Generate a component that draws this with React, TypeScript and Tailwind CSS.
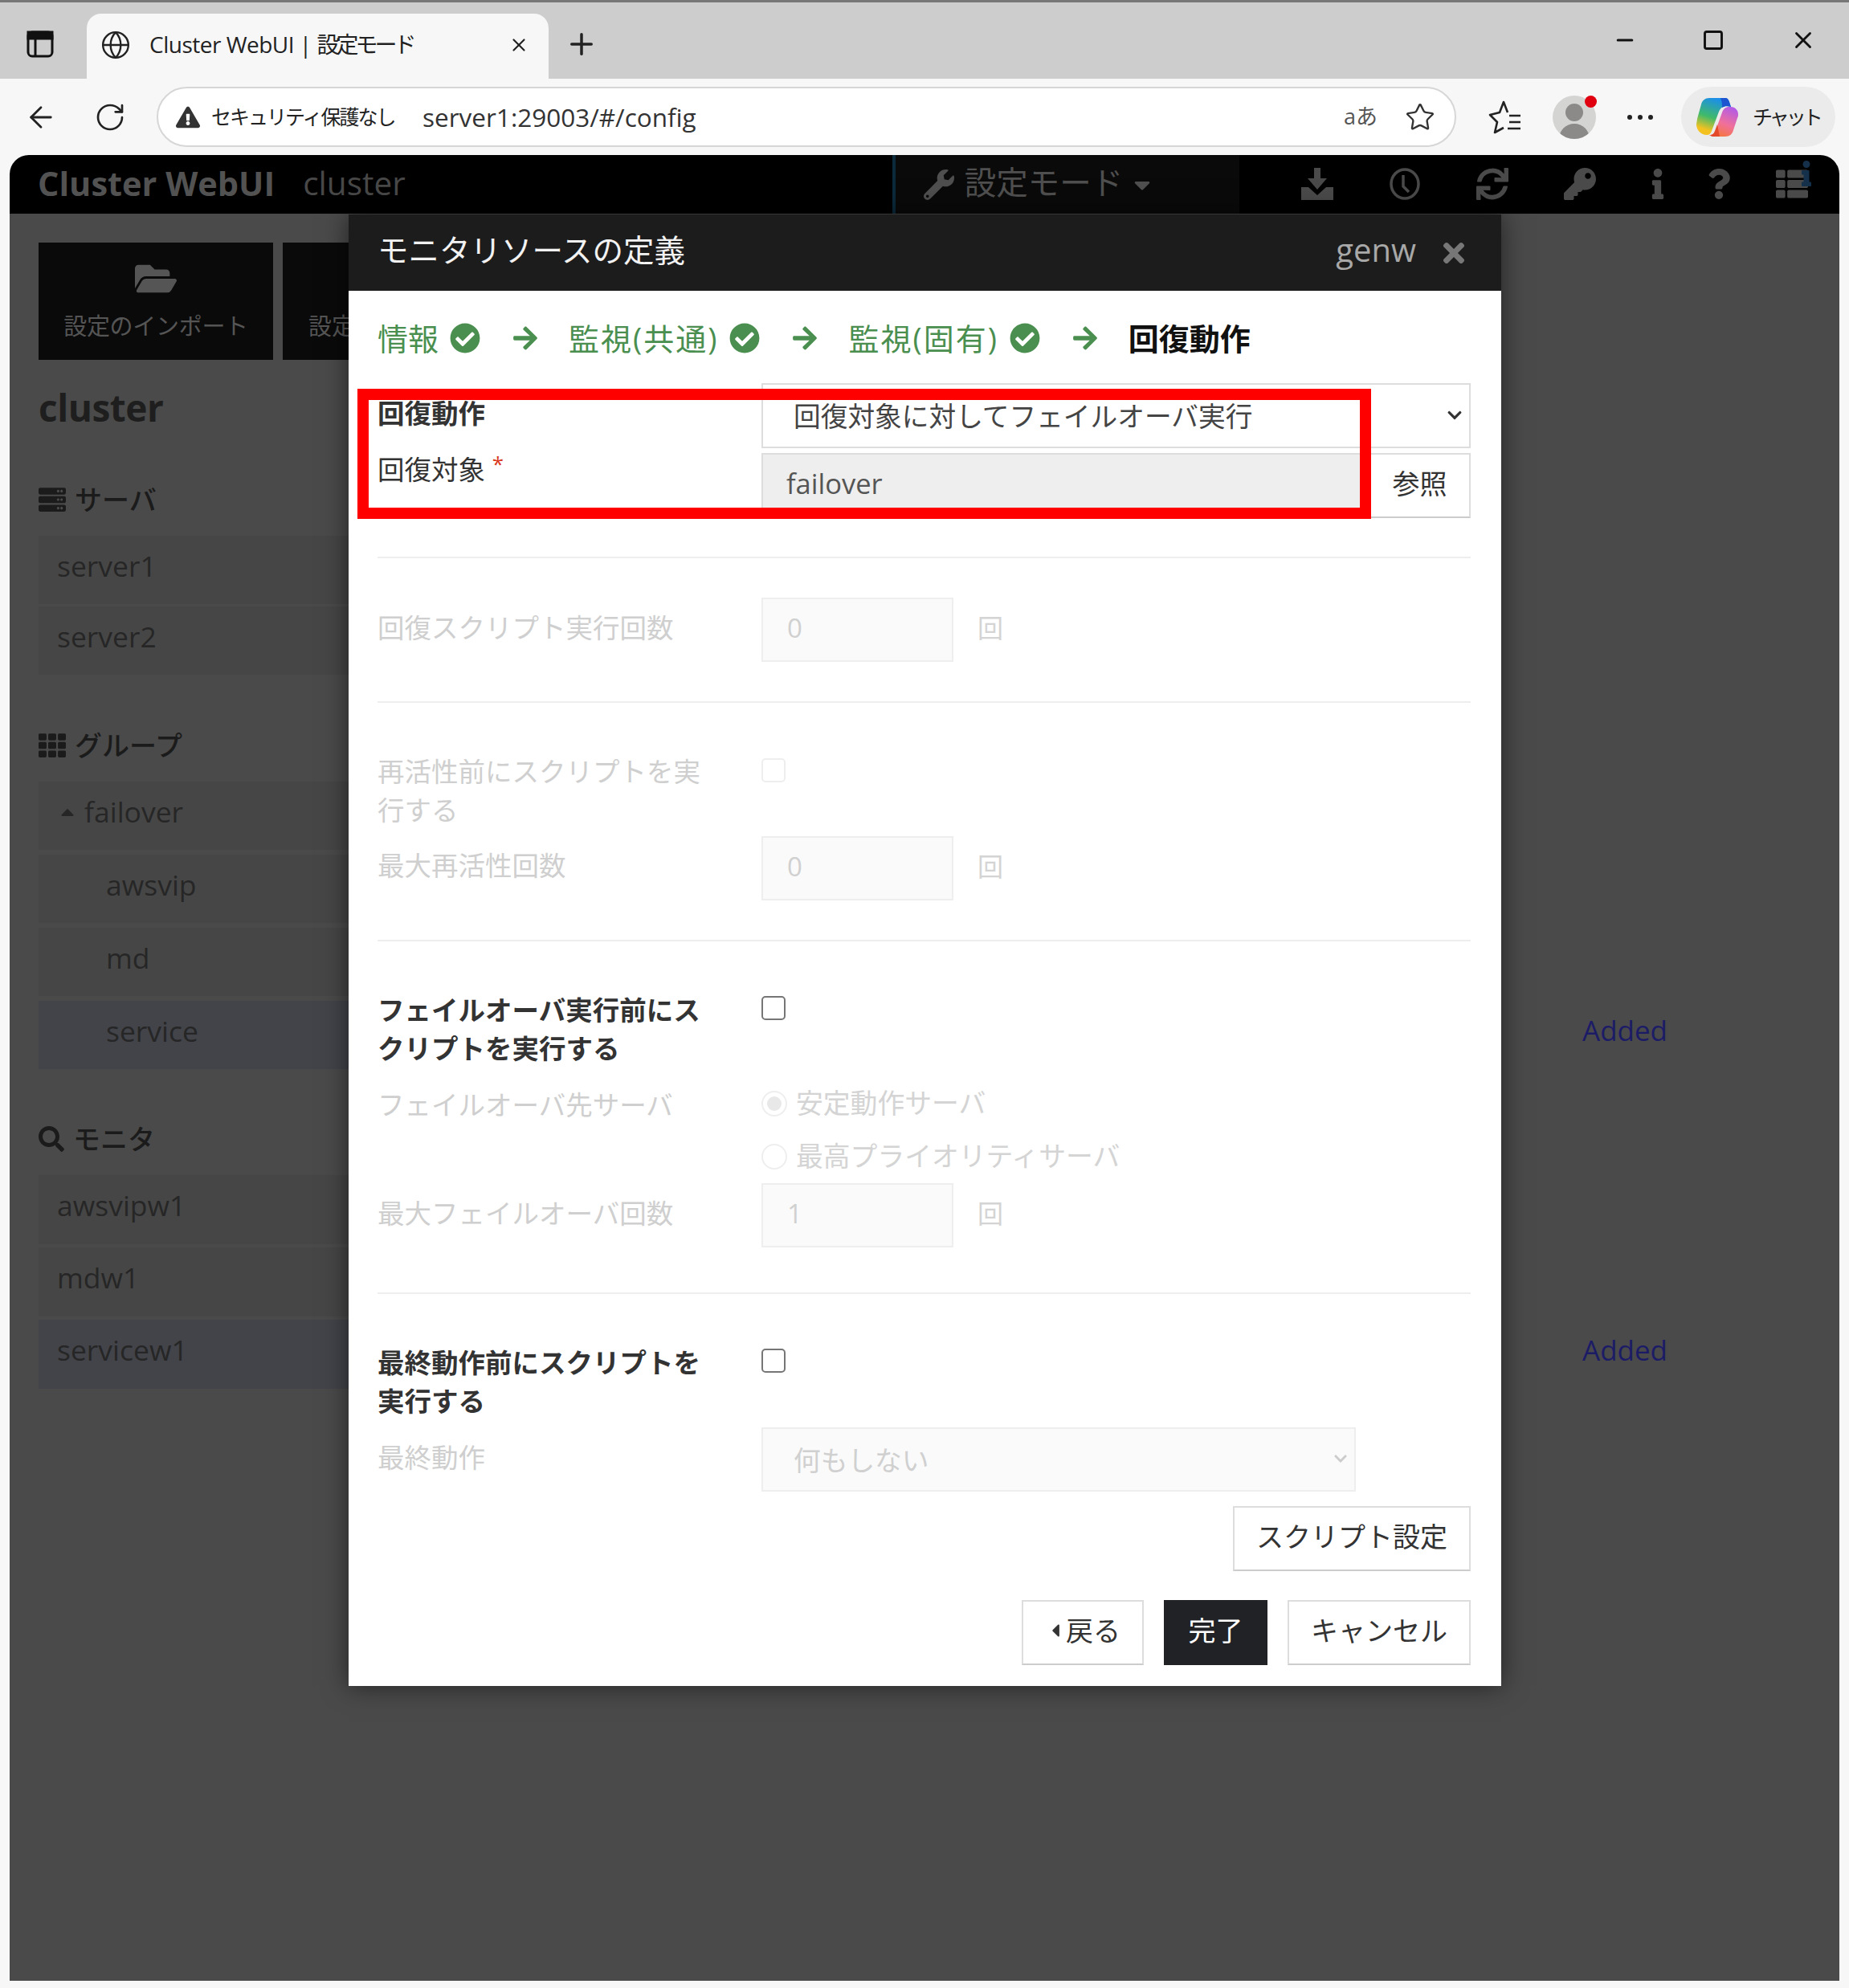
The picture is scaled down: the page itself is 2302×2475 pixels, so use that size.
import { ArrowLeft, Globe, Minus, Plus, RotateCw, Square, Star, X } from 'lucide-react';
import { ReactNode } from 'react';
import {
  FaArrowRight,
  FaCaretDown,
  FaCaretLeft,
  FaCaretUp,
  FaCheckCircle,
  FaChevronDown,
  FaExclamationTriangle,
  FaFolderOpen,
  FaInfo,
  FaKey,
  FaQuestion,
  FaSearch,
  FaServer,
  FaSync,
  FaTh,
  FaThList,
  FaTimes,
  FaWrench,
} from 'react-icons/fa';

const fontStack = "font-['Open_Sans','Noto_Sans_CJK_JP',sans-serif]";

const TabBar = () => (
  <div className="flex h-[98px] items-end border-t-[3px] border-[#777] bg-[#cdcdcd]">
    <svg className="mb-[26px] ml-[33px] h-[34px] w-[34px]" viewBox="0 0 34 34" fill="none" stroke="#111" strokeWidth="3">
      <rect x="2" y="2" width="30" height="30" rx="5" />
      <rect x="2" y="2" width="30" height="8" fill="#111" />
      <path d="M11 10v22" />
    </svg>
    <div className="ml-[41px] flex h-[81px] w-[575px] items-center rounded-t-[18px] bg-[#f7f7f7] pb-[3px] pl-[17px]">
      <Globe size={38} strokeWidth={1.5} className="text-[#222]" />
      <span className="ml-[23px] w-[447px] pb-[2px] text-[28px] tracking-[-0.5px] text-[#222]">
        Cluster WebUI | <span className="tracking-[-4px]">設定モード</span>
      </span>
      <X size={26} strokeWidth={2} className="text-[#222]" />
    </div>
    <Plus size={42} strokeWidth={2} className="mb-[22px] ml-[20px] text-[#222]" />
    <div className="mb-[31px] ml-auto flex items-center gap-[81px] pr-[40px] text-[#111]">
      <Minus size={30} strokeWidth={2.5} />
      <Square size={28} strokeWidth={2.5} />
      <X size={34} strokeWidth={2} />
    </div>
  </div>
);

const CopilotLogo = () => (
  <svg className="h-[48px] w-[52px]" viewBox="0 0 52 48">
    <defs>
      <linearGradient id="copilotLeft" x1="0.5" y1="0" x2="0.2" y2="1">
        <stop offset="0" stopColor="#1b8fe8" />
        <stop offset="0.5" stopColor="#3fba6a" />
        <stop offset="0.85" stopColor="#f4c220" />
      </linearGradient>
      <linearGradient id="copilotRight" x1="0.7" y1="0" x2="0.3" y2="1">
        <stop offset="0" stopColor="#b45ce6" />
        <stop offset="0.55" stopColor="#f0709a" />
        <stop offset="1" stopColor="#f6763a" />
      </linearGradient>
    </defs>
    <path d="M16 0h20c3 0 4 2 5 5l2 6c-6-2-12-1-15 6l-9 24c-1 3-3 5-6 5-7 0-13-6-13-13 0-2 1-5 1-7L6 8c1-5 5-8 10-8z" fill="url(#copilotLeft)" />
    <path d="M30 0h6c3 0 4 2 5 5l2 6c-4-1-8-1-11 1 0-4 0-8-2-12z" fill="#1c55cf" />
    <path d="M36 48H16c4 0 6-2 7-5l9-25c2-6 6-7 9-7h2c5 0 9 4 9 9 0 2 0 3-1 5L46 40c-1 5-5 8-10 8z" fill="url(#copilotRight)" />
    <path d="M16 46c4 0 6-2 7-5l3-8 3 15H20z" fill="#e4492a" />
  </svg>
);

const AddressBar = () => (
  <div className="flex h-[95px] items-center bg-[#f7f7f7] pl-[30px]">
    <ArrowLeft size={42} strokeWidth={1.6} className="text-[#222]" />
    <RotateCw size={40} strokeWidth={1.6} className="ml-[45px] text-[#222]" />
    <div className="ml-[38px] flex h-[75px] w-[1618px] items-center rounded-full border-2 border-[#d6d6d6] bg-white pl-[22px]">
      <FaExclamationTriangle size={30} className="text-[#333]" />
      <span className="ml-[14px] w-[263px] text-[25px] tracking-[-2px] text-[#222]">セキュリティ保護なし</span>
      <span className="text-[31.5px] leading-none text-[#333]">server1:29003/#/config</span>
      <span className="ml-auto text-[27px] text-[#555]">aあ</span>
      <Star size={38} strokeWidth={1.5} className="ml-[34px] mr-[24px] text-[#333]" />
    </div>
    <svg className="ml-[40px] h-[44px] w-[42px]" viewBox="0 0 42 44" fill="none" stroke="#222" strokeWidth="2.6" strokeLinejoin="round">
      <path d="M24 16L19 3l-5 13-12 3 9 9-3 13 11-6" />
      <path d="M26 20h14M26 28h14M24 36h16" />
    </svg>
    <div className="relative ml-[38px] flex h-[54px] w-[54px] flex-col items-center justify-end overflow-hidden rounded-full bg-[#d4d4d2]">
      <div className="mb-[3px] h-[22px] w-[22px] rounded-full bg-[#8b8a88]" />
      <div className="h-[19px] w-[38px] rounded-t-full bg-[#8b8a88]" />
    </div>
    <div className="relative -top-[19px] -ml-[14px] h-[15px] w-[15px] rounded-full bg-[#e0000f]" />
    <div className="ml-[38px] flex gap-[7px]">
      <span className="h-[6px] w-[6px] rounded-full bg-[#222]" />
      <span className="h-[6px] w-[6px] rounded-full bg-[#222]" />
      <span className="h-[6px] w-[6px] rounded-full bg-[#222]" />
    </div>
    <div className="ml-[35px] flex h-[75px] w-[192px] items-center rounded-full bg-[#ebebeb] pl-[19px]">
      <CopilotLogo />
      <span className="ml-[18px] text-[25px] tracking-[-4px] text-[#222]">チャット</span>
    </div>
  </div>
);

const AppHeader = () => (
  <div className="flex h-[73px] items-center overflow-hidden bg-black">
    <span className="ml-[35px] pb-[3px] text-[41.5px] font-bold text-[#525252]">Cluster WebUI</span>
    <span className="ml-[35px] pb-[3px] text-[40.5px] text-[#484848]">cluster</span>
    <div className="ml-[606px] flex h-full w-[432px] shrink-0 items-center border-l-4 border-[#0b2a3c] bg-[#0a0a0a] pl-[35px] text-[#4f4f4f]">
      <FaWrench size={38} />
      <span className="ml-[13px] pb-[3px] text-[39.5px]">設定モード</span>
      <FaCaretDown size={32} className="ml-[8px]" />
    </div>
    <div className="flex items-center pb-[2px] text-[#4a4a4a]">
      <svg className="ml-[77px] h-[40px] w-[40px]" viewBox="0 0 40 40" fill="currentColor">
        <path d="M16 0h8v13h8L20 27 8 13h8z" />
        <path d="M0 24h9l11 10 11-10h9v16H0z" />
      </svg>
      <svg className="ml-[70px] h-[40px] w-[38px]" viewBox="0 0 38 40" fill="none" stroke="currentColor" strokeWidth="3.5">
        <ellipse cx="19" cy="20" rx="17" ry="18" />
        <path d="M17 9v14l7 7" />
      </svg>
      <FaSync size={40} className="ml-[70px]" />
      <FaKey size={40} className="ml-[69px]" />
      <FaInfo size={38} className="ml-[58px]" />
      <FaQuestion size={38} className="ml-[38px]" />
      <div className="relative ml-[52px]">
        <FaThList size={40} />
        <FaInfo size={32} className="absolute -right-[14px] -top-[9px] text-[#14304a]" />
      </div>
    </div>
  </div>
);

const SideHeading = ({ icon, label, className }: { icon: ReactNode; label: string; className: string }) => (
  <div className={`flex h-[50px] items-center gap-[11px] text-[34px] font-medium text-[#1b1b1b] ${className}`}>
    {icon}
    <span>{label}</span>
  </div>
);

const SideRow = ({ label, indent = 'pl-[23px]', height = 'h-[85px]', active, added }: {
  label: ReactNode;
  indent?: string;
  height?: string;
  active?: boolean;
  added?: boolean;
}) => (
  <div className="flex items-center">
    <div className={`flex w-[500px] items-center pb-[10px] text-[35.5px] text-[#262626] ${height} ${indent} ${active ? 'bg-[#42444a]' : 'bg-[#464646]'}`}>
      {label}
    </div>
    {added && <span className="ml-[1422px] pb-[10px] text-[35px] text-[#1c1c66]">Added</span>}
  </div>
);

const Sidebar = () => (
  <div className="flex-1 bg-[#4a4a4a] pl-[36px] pt-[36px]">
    <div className="flex gap-[12px]">
      <div className="flex h-[146px] w-[292px] flex-col items-center bg-[#0a0a0a] pt-[19px] text-[#555]">
        <FaFolderOpen size={52} />
        <span className="mt-[11px] text-[29px] tracking-[-0.3px]">設定のインポート</span>
      </div>
      <div className="flex h-[146px] w-[292px] flex-col items-start bg-[#0a0a0a] pl-[32px] pt-[82px] text-[#555]">
        <span className="whitespace-nowrap text-[29px]">設定</span>
      </div>
    </div>
    <div className="mt-[29px] flex h-[60px] items-center text-[46px] font-bold tracking-[-0.5px] text-[#1e1e1e]">cluster</div>

    <SideHeading className="mt-[60px]" label="サーバ" icon={<FaServer size={34} />} />
    <div className="mt-[20px] flex flex-col gap-[3px]">
      <SideRow label="server1" />
      <SideRow label="server2" />
    </div>

    <SideHeading className="mt-[63px]" label="グループ" icon={<FaTh size={34} />} />
    <div className="mt-[20px] flex flex-col gap-[6px]">
      <SideRow label={<><FaCaretUp size={26} className="mr-[8px]" />failover</>} />
      <SideRow label="awsvip" indent="pl-[84px]" />
      <SideRow label="md" indent="pl-[84px]" />
      <SideRow label="service" indent="pl-[84px]" active added />
    </div>

    <SideHeading className="mt-[62px]" label="モニタ" icon={<FaSearch size={32} />} />
    <div className="mt-[20px] flex flex-col gap-[4px]">
      <SideRow label="awsvipw1" height="h-[86px]" />
      <SideRow label="mdw1" height="h-[86px]" />
      <SideRow label="servicew1" height="h-[86px]" active added />
    </div>
  </div>
);

const StepDone = ({ label, wide }: { label: string; wide?: boolean }) => (
  <>
    <span className={wide ? 'tracking-[2px]' : ''}>{label}</span>
    <FaCheckCircle size={38} className="ml-[14px]" />
    <FaArrowRight size={34} className="ml-[39px] mr-[37px]" />
  </>
);

const Unit = () => <span className="ml-[30px] pb-[5px] text-[32px] text-[#d4d4d4]">回</span>;

const DisabledNumber = ({ value }: { value: string }) => (
  <div className="flex items-center">
    <input
      disabled
      readOnly
      value={value}
      className="h-[80px] w-[239px] border-2 border-[#eee] bg-[#fafafa] pb-[5px] pl-[30px] text-[33px] text-[#d0d0d0]"
    />
    <Unit />
  </div>
);

const Label = ({ children, bold, muted, className = '' }: { children: ReactNode; bold?: boolean; muted?: boolean; className?: string }) => (
  <div className={`w-[478px] shrink-0 pr-[60px] text-[33.5px] leading-[48px] ${bold ? 'font-bold' : ''} ${muted ? 'text-[#cfcfcf]' : 'text-[#333]'} ${className}`}>
    {children}
  </div>
);

const Divider = ({ className }: { className: string }) => <div className={`h-[2px] bg-[#eee] ${className}`} />;

const Check = ({ disabled, className }: { disabled?: boolean; className: string }) => (
  <input
    type="checkbox"
    disabled={disabled}
    className={`h-[30px] w-[30px] appearance-none rounded-[5px] border-2 bg-white ${disabled ? 'border-[#eee]' : 'border-[#767676]'} ${className}`}
  />
);

const Radio = ({ label, selected }: { label: string; selected?: boolean }) => (
  <div className="flex h-[33px] items-center">
    <span className="flex h-[32px] w-[32px] items-center justify-center rounded-full border-2 border-[#eee]">
      {selected && <span className="h-[18px] w-[18px] rounded-full bg-[#e8e8e8]" />}
    </span>
    <span className="ml-[11px] text-[33.8px] text-[#d4d4d4]">{label}</span>
  </div>
);

const OutlineButton = ({ children, className }: { children: ReactNode; className: string }) => (
  <button className={`flex h-[81px] items-center justify-center border-2 border-[#ddd] border-b-[#ccc] bg-white pb-[5px] text-[34px] text-[#333] ${className}`}>
    {children}
  </button>
);

const Modal = () => (
  <div className={`absolute left-[434px] top-[267px] h-[1832px] w-[1435px] bg-white shadow-[0_0_30px_rgba(0,0,0,0.55)] ${fontStack}`}>
    <div className="flex h-[95px] items-center bg-[#1c1c1c] pl-[36px] pr-[40px]">
      <span className="pb-[6px] text-[38.5px] text-[#f2f2f2]">モニタリソースの定義</span>
      <span className="ml-auto pb-[8px] text-[40px] text-[#a8a8a8]">genw</span>
      <FaTimes size={38} className="ml-[28px] text-[#777]" />
    </div>

    <div className="pl-[36px] pr-[38px]">
      <div className="mt-[29px] flex h-[60px] items-center text-[38px] text-[#4a8f4f]">
        <StepDone label="情報" />
        <StepDone label="監視(共通)" wide />
        <StepDone label="監視(固有)" wide />
        <span className="text-[38px] font-bold text-[#111]">回復動作</span>
      </div>

      <div className="mt-[26px] flex items-start">
        <Label bold className="pt-[13px]">回復動作</Label>
        <div className="relative flex-1">
          <select className="h-[81px] w-full appearance-none border-2 border-[#ddd] bg-white pl-[38px] pt-[2px] text-[33.7px] text-[#444]">
            <option>回復対象に対してフェイルオーバ実行</option>
          </select>
          <FaChevronDown size={20} className="pointer-events-none absolute right-[10px] top-[30px] text-[#333]" />
        </div>
      </div>
      <div className="mt-[6px] flex items-start">
        <Label className="-mt-[4px]">
          回復対象 <sup className="-top-[10px] text-[26px] text-[#d9391c]">*</sup>
        </Label>
        <input
          readOnly
          value="failover"
          className="h-[81px] w-[756px] border-2 border-[#ddd] bg-[#eee] pb-[7px] pl-[29px] text-[34.5px] text-[#555]"
        />
        <OutlineButton className="flex-1 border-l-0 pl-[2px]">参照</OutlineButton>
      </div>

      <Divider className="mt-[48px]" />
      <div className="mt-[49px] flex items-start">
        <Label muted className="pt-[13px]">回復スクリプト実行回数</Label>
        <DisabledNumber value="0" />
      </div>
      <Divider className="mt-[49px]" />

      <div className="mt-[62px] flex items-start">
        <Label muted className="-mt-[1px]">再活性前にスクリプトを実行する</Label>
        <Check disabled className="mt-[7px]" />
      </div>
      <div className="mt-[9px] flex items-start">
        <Label muted className="pt-[12px]">最大再活性回数</Label>
        <DisabledNumber value="0" />
      </div>
      <Divider className="mt-[49px]" />

      <div className="mt-[63px] flex items-start">
        <Label bold className="-mt-[2px] pb-[2px]">フェイルオーバ実行前にスクリプトを実行する</Label>
        <Check className="mt-[5px]" />
      </div>
      <div className="mt-[21px] flex items-start">
        <Label muted className="-mt-[1px]">フェイルオーバ先サーバ</Label>
        <div className="flex flex-col gap-[33px] pt-[5px]">
          <Radio label="安定動作サーバ" selected />
          <Radio label="最高プライオリティサーバ" />
        </div>
      </div>
      <div className="mt-[17px] flex items-start">
        <Label muted className="pt-[13px]">最大フェイルオーバ回数</Label>
        <DisabledNumber value="1" />
      </div>
      <Divider className="mt-[56px]" />

      <div className="mt-[63px] flex items-start">
        <Label bold className="-mt-[2px] pb-[2px] leading-[47px]">最終動作前にスクリプトを実行する</Label>
        <Check className="mt-[5px]" />
      </div>
      <div className="mt-[7px] flex items-start">
        <Label muted className="pt-[13px]">最終動作</Label>
        <div className="relative w-[740px]">
          <select disabled className="h-[80px] w-full appearance-none border-2 border-[#eee] bg-[#fafafa] pl-[38px] pt-[2px] text-[33.7px] text-[#d0d0d0]">
            <option>何もしない</option>
          </select>
          <FaChevronDown size={18} className="pointer-events-none absolute right-[10px] top-[30px] text-[#ccc]" />
        </div>
      </div>

      <div className="mt-[18px] flex justify-end">
        <OutlineButton className="w-[296px]">スクリプト設定</OutlineButton>
      </div>
      <div className="mt-[36px] flex justify-end gap-[25px]">
        <OutlineButton className="w-[152px]">
          <FaCaretLeft size={26} />
          戻る
        </OutlineButton>
        <button className="h-[81px] w-[129px] bg-[#212226] pb-[5px] text-[34px] text-white">完了</button>
        <OutlineButton className="w-[228px]">キャンセル</OutlineButton>
      </div>
    </div>

    {/* annotation box drawn over the form */}
    <div className="pointer-events-none absolute left-[11px] top-[217px] h-[162px] w-[1262px] border-[14px] border-[#ff0000]" />
  </div>
);

export default function App() {
  return (
    <div className={`relative flex h-[2475px] w-[2302px] flex-col overflow-hidden bg-[#f7f7f7] ${fontStack}`}>
      <TabBar />
      <AddressBar />
      <div className="mx-[12px] mb-[9px] flex flex-1 flex-col overflow-hidden rounded-t-[24px]">
        <AppHeader />
        <Sidebar />
      </div>
      <Modal />
    </div>
  );
}
